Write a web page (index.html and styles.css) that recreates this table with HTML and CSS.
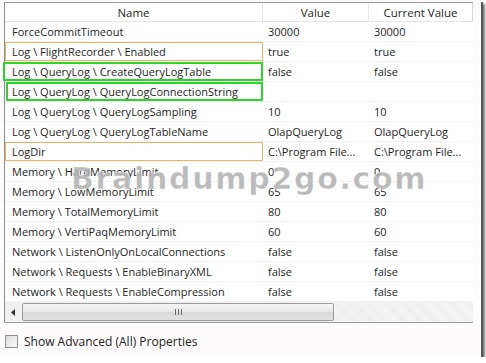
FILE: index.html
```html
<!DOCTYPE html>
<html>
<head>
<meta charset="utf-8">
<link rel="stylesheet" href="styles.css">
</head>
<body>
<div class="frame">
  <div class="grid">
    <div class="row head">
      <div class="c name">Name</div>
      <div class="c val">Value</div>
      <div class="c cur">Current Value</div>
    </div>
    <div class="row"><div class="c name">ForceCommitTimeout</div><div class="c val">30000</div><div class="c cur">30000</div></div>
    <div class="row"><div class="c name orange">Log \ FlightRecorder \ Enabled</div><div class="c val">true</div><div class="c cur">true</div></div>
    <div class="row"><div class="c name green">Log \ QueryLog \ CreateQueryLogTable</div><div class="c val">false</div><div class="c cur">false</div></div>
    <div class="row"><div class="c name green g2">Log \ QueryLog \ QueryLogConnectionString</div><div class="c val"></div><div class="c cur"></div></div>
    <div class="row"><div class="c name">Log \ QueryLog \ QueryLogSampling</div><div class="c val">10</div><div class="c cur">10</div></div>
    <div class="row"><div class="c name">Log \ QueryLog \ QueryLogTableName</div><div class="c val">OlapQueryLog</div><div class="c cur">OlapQueryLog</div></div>
    <div class="row"><div class="c name orange">LogDir</div><div class="c val">C:\Program File...</div><div class="c cur">C:\Program File...</div></div>
    <div class="row"><div class="c name">Memory \ HardMemoryLimit</div><div class="c val">0</div><div class="c cur">0</div></div>
    <div class="row"><div class="c name">Memory \ LowMemoryLimit</div><div class="c val">65</div><div class="c cur">65</div></div>
    <div class="row"><div class="c name">Memory \ TotalMemoryLimit</div><div class="c val">80</div><div class="c cur">80</div></div>
    <div class="row"><div class="c name">Memory \ VertiPaqMemoryLimit</div><div class="c val">60</div><div class="c cur">60</div></div>
    <div class="row"><div class="c name">Network \ ListenOnlyOnLocalConnections</div><div class="c val">false</div><div class="c cur">false</div></div>
    <div class="row"><div class="c name">Network \ Requests \ EnableBinaryXML</div><div class="c val">false</div><div class="c cur">false</div></div>
    <div class="row"><div class="c name">Network \ Requests \ EnableCompression</div><div class="c val">false</div><div class="c cur">false</div></div>
    <div class="hscroll">
      <div class="arrow"><svg width="5" height="7" viewBox="0 0 5 7"><path d="M4 0 L0 3.5 L4 7 Z" fill="#333"/></svg></div>
      <div class="thumb"><span class="grip"></span><span class="grip"></span><span class="grip"></span></div>
      <div class="track"></div>
    </div>
  </div>
  <div class="options">
    <span class="check"></span>
    <span class="label">Show Advanced (All) Properties</span>
  </div>
  <div class="mark">Braindump2go.com</div>
</div>
</body>
</html>
```
FILE: styles.css
```css
html, body {
  margin: 0;
  padding: 0;
  background: #fff;
}
body {
  font-family: "Open Sans", "Noto Sans", sans-serif;
  font-size: 11px;
  color: #1e1e1e;
}
.frame {
  position: relative;
  width: 477px;
  height: 355px;
  padding: 2px 0 0 4px;
  box-sizing: content-box;
  background: #fdfbfc;
  box-shadow: 2px 2px 0 #555, 4px 4px 2px #777;
}
.grid {
  width: 469px;
  border-left: 1px solid #8a8f96;
  border-top: 1px solid #9a9ea4;
  border-bottom: 1px solid #9a9ea4;
  background: #fff;
  box-sizing: border-box;
}
.row {
  display: grid;
  grid-template-columns: 258px 106px 1fr;
  height: 20px;
  border-bottom: 1px solid #f2f2f2;
  box-sizing: border-box;
}
.c {
  display: flex;
  align-items: center;
  padding-left: 7px;
  white-space: nowrap;
  box-sizing: border-box;
}
.val, .cur { padding-left: 5px; }
.head {
  height: 19px;
  border-bottom: 1px solid #e4e4e4;
}
.head .c {
  justify-content: center;
  padding-left: 0;
  border-right: 1px solid #e6e6e6;
  font-size: 11.5px;
}
.head .cur { border-right: 1px solid #d8d8d8; }
.orange {
  box-shadow: inset 0 0 0 1px #f0b25c;
}
.green {
  box-shadow: inset 0 0 0 2px #2fd42a;
  margin-left: -2px;
  padding-left: 9px;
}
.g2 { margin-left: 1px; padding-left: 6px; }
.hscroll {
  display: flex;
  height: 20px;
  align-items: stretch;
  background: #f0f0f0;
}
.arrow {
  width: 17px;
  display: flex;
  align-items: center;
  justify-content: center;
  background: #f0f0f0;
}
.thumb {
  width: 312px;
  margin: 1px 0;
  border: 1px solid #9d9d9d;
  border-radius: 2px;
  background: linear-gradient(#f6f6f6, #e6e6e6 50%, #d9d9d9 51%, #e0e0e0);
  display: flex;
  align-items: center;
  justify-content: center;
  gap: 2px;
  box-sizing: border-box;
}
.grip {
  width: 1px;
  height: 6px;
  background: #666;
}
.track {
  flex: 1;
  background: repeating-linear-gradient(45deg, #ededed 0 1px, #f6f6f6 1px 2px);
}
.options {
  display: flex;
  align-items: center;
  height: 36px;
  gap: 6px;
  padding-left: 1px;
  font-size: 12px;
  color: #222;
}
.check {
  width: 11px;
  height: 11px;
  border: 1px solid #8e8f8f;
  background: linear-gradient(135deg, #dcdcdc, #fbfbfb);
}
.mark {
  position: absolute;
  left: 71px;
  top: 161px;
  font-family: "DejaVu Sans", sans-serif;
  font-weight: bold;
  font-size: 30px;
  letter-spacing: 1.7px;
  color: rgba(178, 178, 178, 0.9);
  -webkit-text-stroke: 0.6px rgba(255,255,255,0.7);
  pointer-events: none;
}
```
